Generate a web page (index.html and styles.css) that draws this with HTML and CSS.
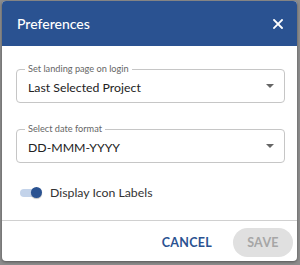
FILE: index.html
```html
<!DOCTYPE html>
<html lang="en">
<head>
  <meta charset="UTF-8" />
  <title>Preferences</title>
  <link rel="stylesheet" href="styles.css">
</head>
<body>
  <div class="dialog">
    <div class="dialog-header">
      <h2>Preferences</h2>
      <button class="close-btn" aria-label="Close">
        <svg width="10" height="10" viewBox="0 0 10 10"><path d="M1 1L9 9M9 1L1 9" stroke="#fff" stroke-width="1.8" stroke-linecap="square"/></svg>
      </button>
    </div>

    <div class="dialog-body">
      <div class="select-field">
        <label>Set landing page on login</label>
        <span class="value">Last Selected Project</span>
        <span class="arrow"></span>
      </div>

      <div class="select-field">
        <label>Select date format</label>
        <span class="value">DD-MMM-YYYY</span>
        <span class="arrow"></span>
      </div>

      <div class="switch-row">
        <span class="switch"><span class="thumb"></span></span>
        <span>Display Icon Labels</span>
      </div>
    </div>

    <div class="dialog-actions">
      <button class="text-btn">CANCEL</button>
      <button class="save-btn" disabled>SAVE</button>
    </div>
  </div>
</body>
</html>
```

FILE: styles.css
```css
body {
  margin: 0;
  height: 265px;
  background: #8c8c8c;
  font-family: Lato, 'Liberation Sans', sans-serif;
  overflow: hidden;
}

.dialog {
  margin: 1px 3px 0 2px;
  height: 260px;
  background: #ffffff;
  border-radius: 4px;
  box-shadow: 0 1px 3px rgba(0, 0, 0, 0.4);
  display: flex;
  flex-direction: column;
  overflow: hidden;
}

.dialog-header {
  height: 45px;
  flex: none;
  background: #2a5291;
  display: flex;
  align-items: center;
  justify-content: space-between;
  padding: 0 14px 0 15px;
}

.dialog-header h2 {
  margin: 0;
  color: #ffffff;
  font-size: 14px;
  font-weight: 500;
}

.close-btn {
  background: none;
  border: none;
  padding: 0;
  width: 10px;
  height: 10px;
  display: flex;
  cursor: pointer;
}

.dialog-body {
  flex: 1;
  padding: 23px 12px 0 14px;
  border-bottom: 1px solid #d0d0d0;
}

.select-field {
  position: relative;
  padding: 3px 10px 0 11px;
  height: 34px;
  border: 1px solid #c6c6c6;
  border-radius: 4px;
  display: flex;
  align-items: center;
  justify-content: space-between;
  box-sizing: border-box;
}

.select-field + .select-field {
  margin-top: 26px;
}

.select-field label {
  position: absolute;
  left: 8px;
  top: -7px;
  padding: 0 3px;
  background: #ffffff;
  font-size: 9.2px;
  line-height: 12px;
  color: #666666;
}

.select-field .value {
  font-size: 12.3px;
  color: #222222;
}

.arrow {
  width: 0;
  height: 0;
  border-left: 4.5px solid transparent;
  border-right: 4.5px solid transparent;
  border-top: 4.5px solid #666666;
  margin-bottom: 3px;
}

.switch-row {
  display: flex;
  align-items: center;
  gap: 12px;
  font-size: 12.3px;
  color: #333333;
  margin: 21px 0 0 4px;
  height: 17px;
}

.switch {
  width: 18px;
  height: 8px;
  border-radius: 4px;
  background: #c3d3ea;
  position: relative;
}

.thumb {
  position: absolute;
  right: -4px;
  top: -2px;
  width: 11px;
  height: 11px;
  border-radius: 50%;
  background: #2a5291;
  box-shadow: 0 1px 1px rgba(0, 0, 0, 0.25);
}

.dialog-actions {
  height: 40px;
  flex: none;
  display: flex;
  align-items: center;
  justify-content: flex-end;
  gap: 21px;
  padding: 3px 4px 0 0;
  box-sizing: border-box;
}

.text-btn {
  background: none;
  border: none;
  padding: 0;
  font-family: inherit;
  font-size: 12.5px;
  font-weight: bold;
  letter-spacing: 0.3px;
  color: #2a5291;
  cursor: pointer;
}

.save-btn {
  width: 60px;
  height: 29px;
  border: none;
  border-radius: 15px;
  background: #e0e0e0;
  color: #a6a6a6;
  font-family: inherit;
  font-size: 12.5px;
  font-weight: bold;
  letter-spacing: 0.3px;
}
```
